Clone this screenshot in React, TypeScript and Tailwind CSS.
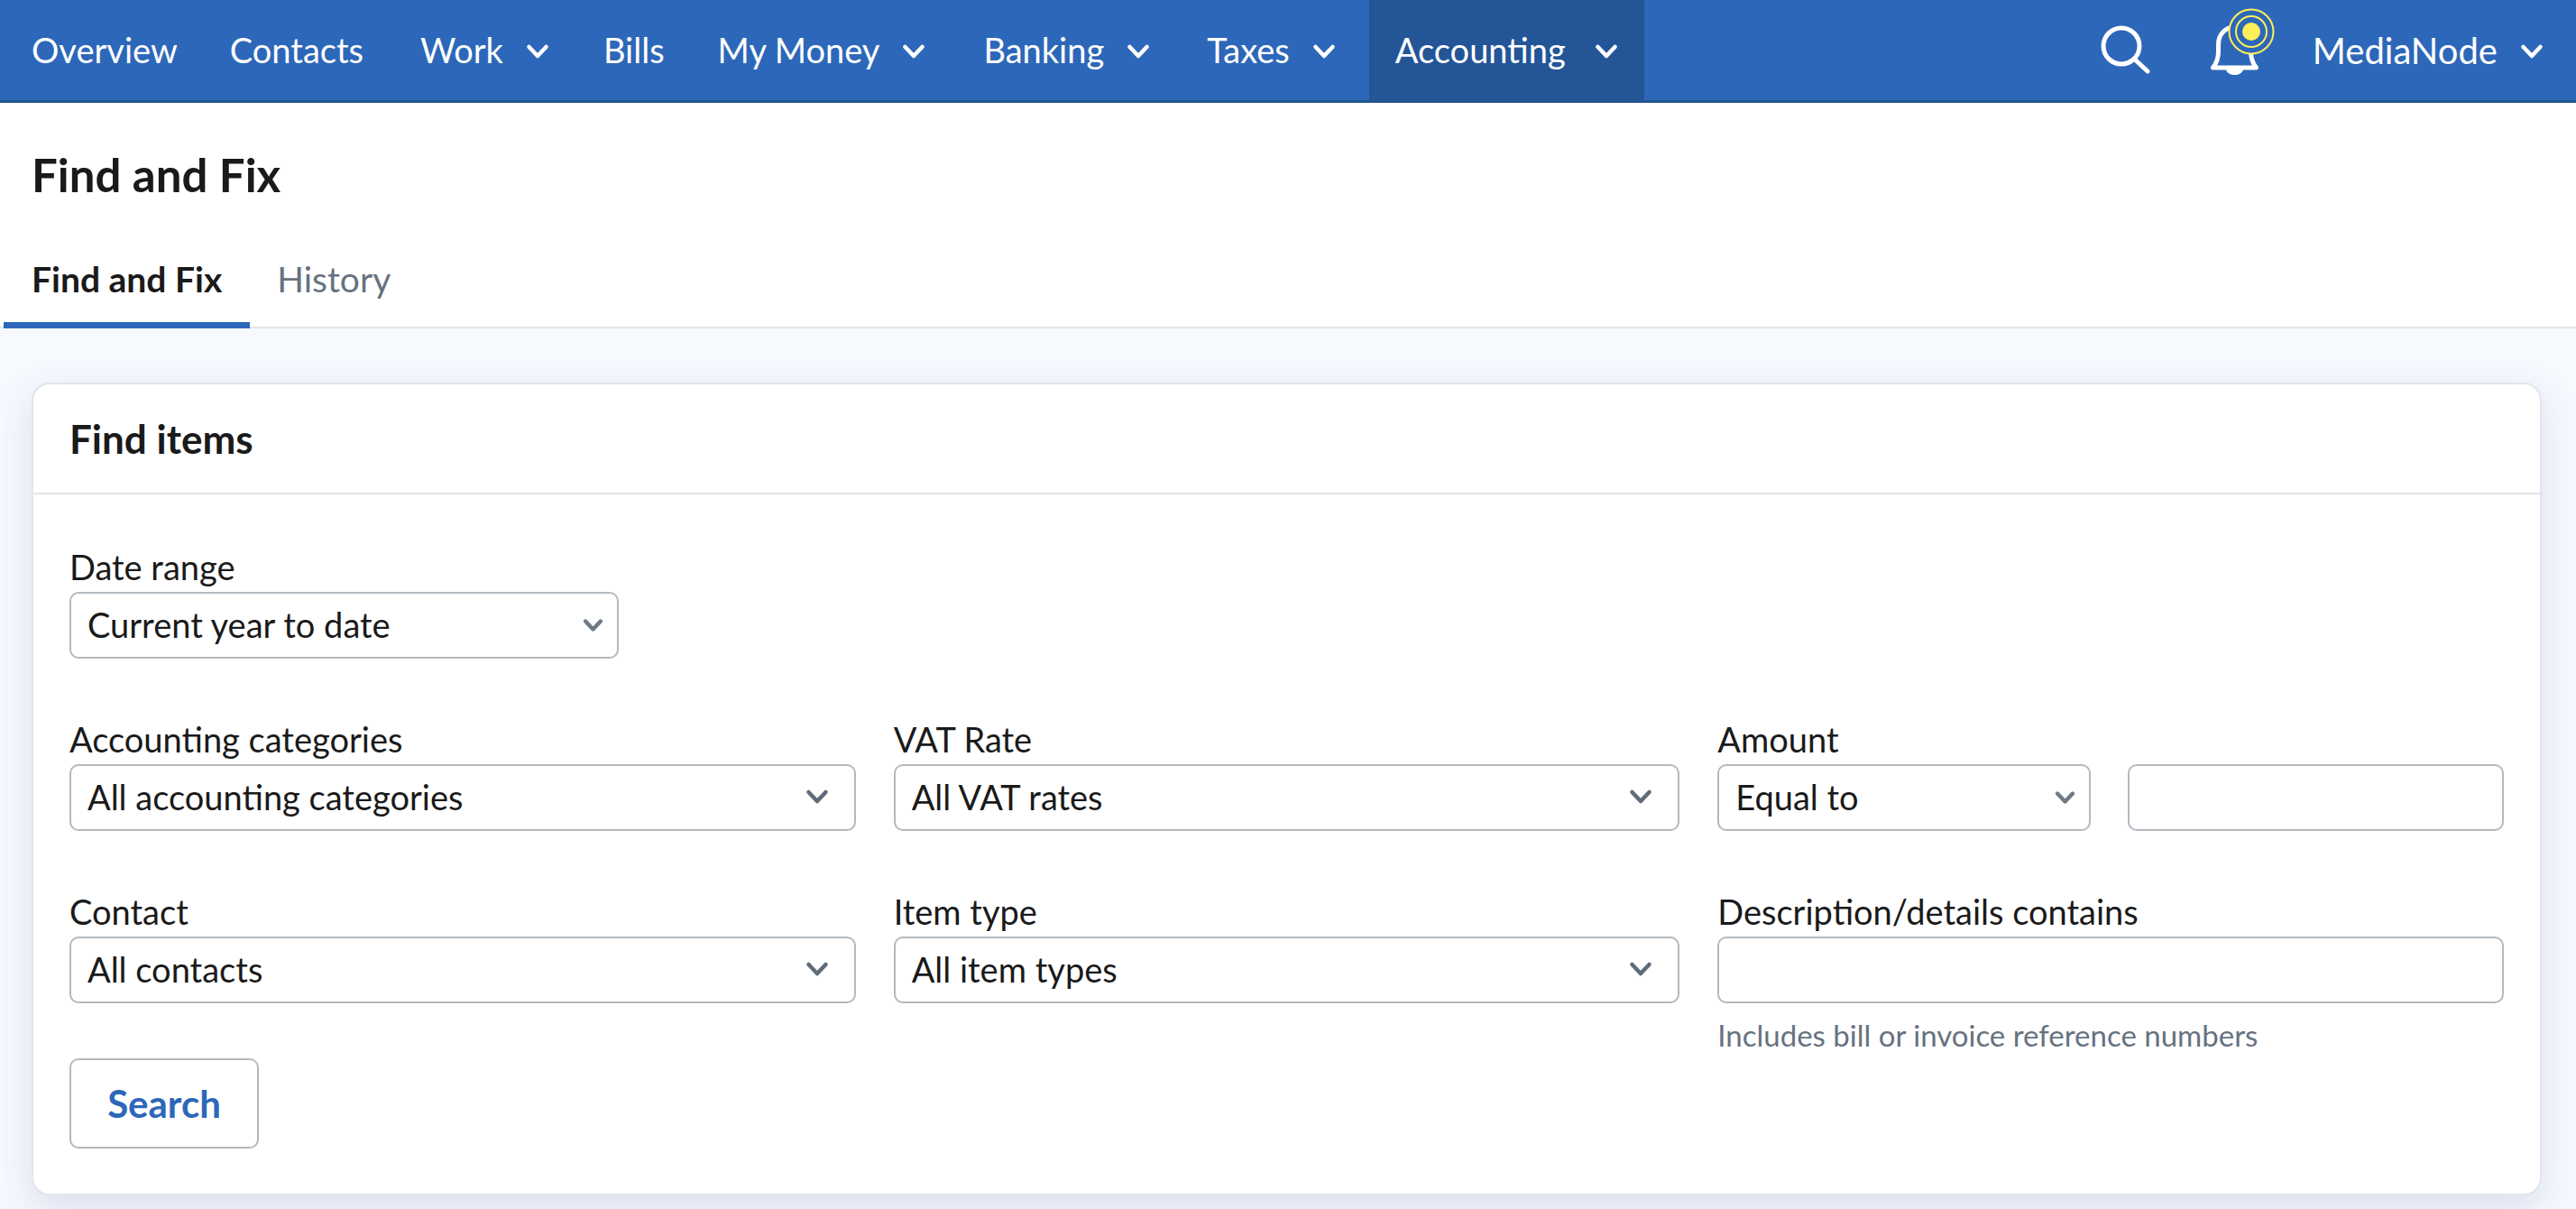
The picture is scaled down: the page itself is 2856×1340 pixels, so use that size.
import React from 'react';

const font = { fontFamily: 'Lato, "Noto Sans", sans-serif' };

const Chevron: React.FC<{ className?: string; strokeWidth?: number }> = ({ className, strokeWidth = 4.500 }) => (
    <svg className={className} viewBox="0 0 26 18" fill="none" stroke="currentColor" strokeWidth={strokeWidth} strokeLinecap="round" strokeLinejoin="round">
        <path d="M3.5 4l9.5 10 9.5-10" />
    </svg>
);

const NavItem: React.FC<{ label: string; menu?: boolean; active?: boolean; className?: string }> = ({ label, menu, active, className = '' }) => (
    <a href="#" className={`flex items-center h-full text-white ${active ? 'bg-[#235597]' : ''} ${className}`}>
        {label}
        {menu && <Chevron className={`w-[26px] h-[18px] mt-[3px] ${active ? 'ml-[32px]' : 'ml-[25px]'}`} />}
    </a>
);

const SearchIcon: React.FC = () => (
    <svg className="w-[70px] h-[70px]" viewBox="0 0 70 70" fill="none" stroke="#fff" strokeLinecap="round">
        <circle cx="29" cy="30" r="20" strokeWidth="5" />
        <path d="M44 45l14 13" strokeWidth="5" />
    </svg>
);

const BellIcon: React.FC = () => (
    <svg className="w-[90px] h-[90px]" viewBox="0 0 90 90" fill="none">
        <path d="M13.5 74c4-5 6-11 6-18v-8c0-11 8-19 18-19s18 8 18 19v8c0 7 2 13 6 18z" stroke="#fff" strokeWidth="5" strokeLinejoin="round" />
        <path d="M28 76h19c-1 4-5 6-9.500 6S29 80 28 76z" fill="#fff" />
        <circle cx="56" cy="34" r="24.500" fill="#2d67b9" stroke="#fdee5a" strokeWidth="2" />
        <circle cx="56" cy="34" r="17" fill="#2d67b9" stroke="#fdee5a" strokeWidth="2" />
        <circle cx="56" cy="34" r="10" fill="#fdee5a" />
    </svg>
);

const fieldClass = 'w-full h-[74px] bg-white border-2 border-[#b2b9bf] rounded-[10px] text-[#1a1a1a] text-[38px] outline-none';

const SelectField: React.FC<{ value: string; small?: boolean; className?: string }> = ({ value, small, className = '' }) => (
    <div className={`relative ${className}`}>
        <select defaultValue={value} style={font} className={`${fieldClass} appearance-none pl-[18px] pr-[50px] pb-[2px]`}>
            <option>{value}</option>
        </select>
        <Chevron
            strokeWidth={small ? 5 : 4.500}
            className={
                small
                    ? 'absolute right-[17px] top-[29px] w-[23px] h-[16px] text-[#6e7a86] pointer-events-none'
                    : 'absolute right-[30px] top-[27px] w-[26px] h-[18px] text-[#5f6b78] pointer-events-none'
            }
        />
    </div>
);

const Field: React.FC<{ label: string; children: React.ReactNode; className?: string }> = ({ label, children, className = '' }) => (
    <div className={className}>
        <label className="block h-[45px] text-[38px] leading-[45px] text-[#1a1a1a] mb-[5px]">{label}</label>
        {children}
    </div>
);

export default function App() {
    return (
        <div style={font} className="relative h-screen overflow-hidden bg-[#f6f9fe]">
            <header className="flex items-center h-[114px] bg-[#2d67b9] border-b-[3px] border-[#23558f] text-[38px]">
                <nav className="flex items-center h-full pl-[35px]">
                    <NavItem label="Overview" className="mr-[58px]" />
                    <NavItem label="Contacts" className="mr-[63px]" />
                    <NavItem label="Work" menu className="mr-[60px]" />
                    <NavItem label="Bills" className="mr-[59px]" />
                    <NavItem label="My Money" menu className="mr-[64px]" />
                    <NavItem label="Banking" menu className="mr-[63px]" />
                    <NavItem label="Taxes" menu />
                    <NavItem label="Accounting" menu active className="ml-[37px] px-[29px]" />
                </nav>
                <div className="flex items-center h-full ml-auto pr-[36px]">
                    <SearchIcon />
                    <div className="ml-[47px] mb-[20px]"><BellIcon /></div>
                    <a href="#" className="flex items-center text-[40px] text-white ml-[34px]">
                        MediaNode
                        <Chevron className="w-[26px] h-[18px] ml-[25px] mt-[3px]" />
                    </a>
                </div>
            </header>

            <div className="bg-white border-b-2 border-[#e2e5ea] h-[250px] pt-[50px]">
                <h1 className="pl-[35px] h-[60px] text-[51px] leading-[60px] font-bold text-[#1a1a1a]">Find and Fix</h1>
                <div className="flex h-[140px] pl-[4px] pt-[50px] text-[39px]">
                    <a href="#" className="h-[90px] px-[31px] pt-[6px] border-b-[7px] border-[#2d67b9] font-bold text-[#1a1a1a]">Find and Fix</a>
                    <a href="#" className="h-[90px] pl-[30px] pt-[6px] text-[#66727f]">History</a>
                </div>
            </div>

            <main className="ml-[35px] mr-[38px] mt-[60px] h-[901px] bg-white border-2 border-[#e2e5ea] rounded-[20px] shadow-[0_14px_40px_rgba(60,90,150,0.16)]">
                <div className="h-[122px] flex items-center px-[40px] border-b-2 border-[#e2e5ea]">
                    <h2 className="text-[44px] font-bold text-[#1a1a1a]">Find items</h2>
                </div>
                <div className="px-[40px] pt-[58px]">
                    <Field label="Date range">
                        <SelectField value="Current year to date" small className="w-[609px]" />
                    </Field>
                    <div className="grid grid-cols-3 gap-x-[42px] mt-[67px]">
                        <Field label="Accounting categories">
                            <SelectField value="All accounting categories" />
                        </Field>
                        <Field label="VAT Rate">
                            <SelectField value="All VAT rates" />
                        </Field>
                        <Field label="Amount">
                            <div className="flex gap-[41px]">
                                <SelectField value="Equal to" small className="flex-1" />
                                <input className={`${fieldClass} flex-1 min-w-0`} />
                            </div>
                        </Field>
                    </div>
                    <div className="grid grid-cols-3 gap-x-[42px] mt-[67px]">
                        <Field label="Contact">
                            <SelectField value="All contacts" />
                        </Field>
                        <Field label="Item type">
                            <SelectField value="All item types" />
                        </Field>
                        <Field label="Description/details contains">
                            <input className={fieldClass} />
                            <p className="mt-[15px] text-[33px] leading-[40px] text-[#66727f]">Includes bill or invoice reference numbers</p>
                        </Field>
                    </div>
                    <button className="block mt-[6px] w-[210px] h-[100px] bg-white border-2 border-[#b2b9bf] rounded-[10px] text-[42px] font-bold text-[#2d67b9]">Search</button>
                </div>
            </main>
        </div>
    );
}
